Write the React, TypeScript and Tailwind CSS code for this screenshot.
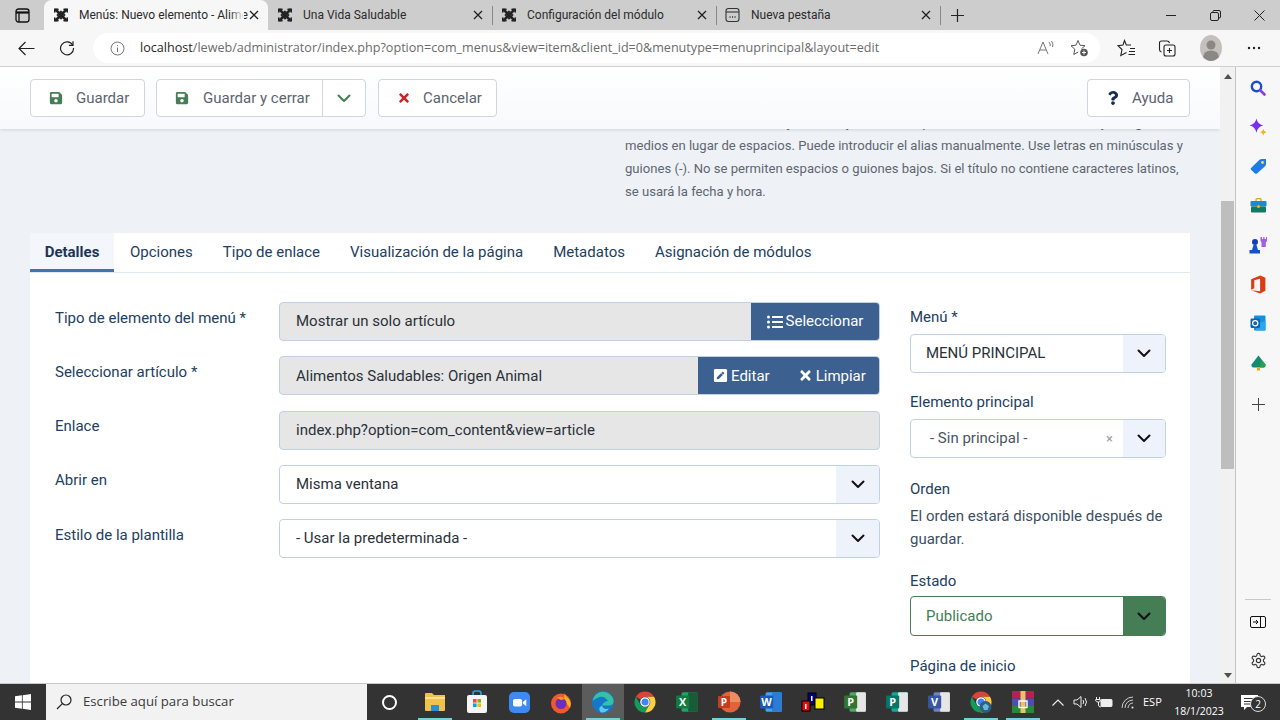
import React from "react";
import { FaSave, FaTimes, FaQuestion, FaListUl, FaPenSquare } from "react-icons/fa";

const JoomlaIcon = () => (
  <svg width="16" height="16" viewBox="0 0 16 16" className="shrink-0" fill="none" stroke="#222" strokeLinecap="round">
    <path d="M3 3 L13 13 M13 3 L3 13" strokeWidth="2.6" />
    <path d="M8 4.5 L11.5 8 L8 11.5 L4.5 8 Z" strokeWidth="1.6" />
    <path d="M1.8 5 V2.2 H5 M11 2.2 H14.2 V5 M1.8 11 V13.8 H5 M11 13.8 H14.2 V11" strokeWidth="1.6" />
  </svg>
);
const NewTabIcon = () => (
  <svg width="15" height="16" viewBox="0 0 15 16" className="shrink-0" fill="none" stroke="#333" strokeWidth="1.1">
    <rect x="1" y="1.5" width="13" height="13" rx="2.5" />
    <path d="M1 5 H14" />
    <path d="M4.5 10 H5.6 M7 10 H8.1 M9.5 10 H10.6" strokeWidth="1.5" />
  </svg>
);
const SmallX = () => (
  <svg width="10" height="10" viewBox="0 0 10 10" stroke="#222" strokeWidth="1.3" fill="none" className="shrink-0">
    <path d="M1 1 L9 9 M9 1 L1 9" />
  </svg>
);
const Chevron = ({ color = "#111" }: { color?: string }) => (
  <svg width="14" height="9" viewBox="0 0 14 9" fill="none" stroke={color} strokeWidth="2" strokeLinecap="round" strokeLinejoin="round">
    <path d="M1.5 1.5 L7 7 L12.5 1.5" />
  </svg>
);

function Tab({ title, active, icon, sep }: { title: string; active?: boolean; icon: React.ReactNode; sep?: boolean }) {
  return (
    <div className={"relative flex h-full w-[224px] shrink-0 items-center pl-[9px] pr-[4px] " + (active ? "rounded-t-lg bg-[#f7f7f7]" : "")}>
      <div className="flex w-[26px] shrink-0 justify-start">{icon}</div>
      <div className="relative min-w-0 flex-1 whitespace-nowrap font-['Roboto',sans-serif] text-[12px] text-[#2b2b2b]">
        {title}
        {active && <div className="absolute inset-y-0 right-0 w-[14px] bg-gradient-to-r from-transparent to-[#f7f7f7]" />}
      </div>
      <div className="flex w-[20px] shrink-0 justify-center">
        <SmallX />
      </div>
      {sep && <div className="absolute -right-px top-[6px] h-[19px] w-px bg-[#8a8a8a]" />}
    </div>
  );
}

function TabBar() {
  return (
    <div className="flex h-[30px] shrink-0 items-stretch bg-[#cdcdcd] font-['Open_Sans',sans-serif]">
      <div className="flex w-[44px] shrink-0 items-center justify-center">
        <svg width="15" height="15" viewBox="0 0 15 15" fill="none" stroke="#111" strokeWidth="1.3">
          <rect x="1" y="1" width="13" height="13" rx="2.5" />
          <path d="M1 4.5 H14" strokeWidth="2.2" />
          <path d="M4 4.5 V14" />
        </svg>
      </div>
      <Tab active title="Menús: Nuevo elemento - Alime" icon={<JoomlaIcon />} />
      <Tab title="Una Vida Saludable" icon={<JoomlaIcon />} sep />
      <Tab title="Configuración del módulo" icon={<JoomlaIcon />} sep />
      <Tab title="Nueva pestaña" icon={<NewTabIcon />} sep />
      <div className="flex w-[34px] shrink-0 items-center justify-center">
        <svg width="15" height="15" viewBox="0 0 15 15" stroke="#222" strokeWidth="1.2"><path d="M7.5 1 V14 M1 7.5 H14" /></svg>
      </div>
      <div className="flex flex-1 items-center justify-end">
        <div className="flex w-[45px] justify-center">
          <svg width="10" height="10" viewBox="0 0 10 10" stroke="#222"><path d="M0 5.5 H10" /></svg>
        </div>
        <div className="flex w-[45px] justify-center">
          <svg width="11" height="11" viewBox="0 0 11 11" fill="none" stroke="#222"><rect x="0.5" y="2.5" width="8" height="8" rx="1.5" /><path d="M3 2.5 V1.5 Q3 0.5 4 0.5 H9 Q10.5 0.5 10.5 2 V7 Q10.5 8 9 8" /></svg>
        </div>
        <div className="flex w-[42px] justify-center">
          <svg width="11" height="11" viewBox="0 0 11 11" stroke="#222"><path d="M0.5 0.5 L10.5 10.5 M10.5 0.5 L0.5 10.5" /></svg>
        </div>
      </div>
    </div>
  );
}

function AddressBar() {
  return (
    <div className="flex h-[36px] shrink-0 items-center bg-[#f7f7f7] font-['Open_Sans',sans-serif]">
      <div className="flex w-[52px] justify-center">
        <svg width="17" height="15" viewBox="0 0 17 15" fill="none" stroke="#222" strokeWidth="1.2"><path d="M16.5 7.5 H1 M7.5 1 L1 7.5 L7.5 14" /></svg>
      </div>
      <div className="flex w-[30px] justify-center">
        <svg width="16" height="16" viewBox="0 0 16 16" fill="none" stroke="#222" strokeWidth="1.2"><path d="M13.6 5 A6.5 6.5 0 1 0 14.5 8" /><path d="M14 1.2 V5.3 H9.9" /></svg>
      </div>
      <div className="ml-[11px] flex h-[30px] w-[1007px] items-center rounded-full bg-white pl-[17px] pr-[11px]">
        <svg width="15" height="15" viewBox="0 0 15 15" fill="none" stroke="#777" strokeWidth="1"><circle cx="7.5" cy="7.5" r="6.5" /><path d="M7.5 6.5 V11 M7.5 4 V5" /></svg>
        <span className="ml-[15px] flex-1 whitespace-nowrap text-[12.6px] text-[#6b6b6b]">
          <span className="text-[#1f1f1f]">localhost</span>/leweb/administrator/index.php?option=com_menus&amp;view=item&amp;client_id=0&amp;menutype=menuprincipal&amp;layout=edit
        </span>
        <svg width="18" height="16" viewBox="0 0 18 16" fill="none" stroke="#777" strokeWidth="1"><path d="M1 14 L6 2 L11 14 M3 10 H9" /><path d="M12 2 Q14 4 13 6 M14.5 1 Q17 4 15.5 7" /></svg>
        <svg className="ml-[15px]" width="19" height="18" viewBox="0 0 19 18" fill="none" stroke="#555" strokeWidth="1"><path d="M8 1.5 L10 6.2 L15 6.7 L11.5 9.8 M8 1.5 L6 6.2 L1 6.7 L4.8 10.2 L3.8 15.5 L8.2 13" /><circle cx="14" cy="13.5" r="3.8" fill="#555" stroke="none" /><path d="M14 11.5 V15.5 M12 13.5 H16" stroke="#fff" /></svg>
      </div>
      <div className="ml-[16px] flex w-[20px] justify-center">
        <svg width="19" height="18" viewBox="0 0 19 18" fill="none" stroke="#222" strokeWidth="1.1"><path d="M14 6 H9.3 L7.5 1.5 L6 6 L1 6.7 L5 10.5 L3.8 16.5 L9.5 13.5" /><path d="M13 9.5 H18 M12 12.5 H18 M11.5 15.5 H18" /></svg>
      </div>
      <div className="ml-[21px] flex w-[20px] justify-center">
        <svg width="18" height="18" viewBox="0 0 18 18" fill="none" stroke="#222" strokeWidth="1.1"><rect x="6" y="6" width="11" height="11" rx="2" /><path d="M11.5 9 V14 M9 11.5 H14" /><path d="M3.5 13 Q1.5 12.5 1.5 10.5 V4 Q1.5 2 3.5 2 H9 Q11 2 11.5 4" /></svg>
      </div>
      <div className="ml-[22px] flex w-[24px] justify-center">
        <svg width="22" height="26" viewBox="0 0 22 26"><ellipse cx="11" cy="13" rx="11" ry="13" fill="#c4c1bd" /><circle cx="11" cy="10" r="4.5" fill="#8a8784" /><path d="M3 22 Q4 15.5 11 15.5 Q18 15.5 19 22 Q15 26 11 26 Q7 26 3 22Z" fill="#8a8784" /></svg>
      </div>
      <div className="ml-[19px] flex w-[24px] justify-center">
        <svg width="14" height="4" viewBox="0 0 14 4" fill="#222"><circle cx="2" cy="2" r="1.2" /><circle cx="7" cy="2" r="1.2" /><circle cx="12" cy="2" r="1.2" /></svg>
      </div>
    </div>
  );
}

function ToolBtn({ icon, label, className = "" }: { icon: React.ReactNode; label: string; className?: string }) {
  return (
    <div className={"flex h-[38px] items-center rounded-[4px] border border-[#cfd6e0] bg-white text-[15px] text-[#5b6470] " + className}>
      {icon}
      <span>{label}</span>
    </div>
  );
}

function Field({ label, children }: { label: string; children: React.ReactNode }) {
  return (
    <div className="flex h-[39px] items-start">
      <div className="w-[224px] shrink-0 pt-[4.5px] text-[15px] text-[#22405f]">{label}</div>
      <div className="flex-1">{children}</div>
    </div>
  );
}

function ReadOnly({ text, children }: { text: string; children?: React.ReactNode }) {
  return (
    <div className="flex h-[39px] items-stretch overflow-hidden rounded-[4px] border border-[#c2d0e4] bg-[#e6e6e6] text-[15px] text-[#2a3138]">
      <div className="flex flex-1 items-center pl-[16px]">{text}</div>
      {children}
    </div>
  );
}

function Select({ text, right, clear }: { text: string; right?: boolean; clear?: boolean }) {
  return (
    <div className="flex h-[39px] items-stretch overflow-hidden rounded-[4px] border border-[#c2d0e4] bg-white text-[15px] text-[#2a3138]">
      <div className={"flex flex-1 items-center " + (clear ? "pl-[19px] text-[#4a5560]" : right ? "pl-[15px]" : "pl-[16px]")}>{text}</div>
      {clear && <div className="flex items-center pr-[10px] text-[13px] text-[#9aa0a6]">×</div>}
      <div className={"flex items-center justify-center bg-[#eef3fb] " + (right ? "w-[42px]" : "w-[43px]")}>
        <Chevron />
      </div>
    </div>
  );
}

function Page() {
  return (
    <div className="relative flex-1 overflow-hidden bg-[#eef2f7] font-['Roboto',sans-serif]">
      <div className="relative z-10 flex h-[62px] items-start justify-between bg-gradient-to-b from-white to-[#f7f9fc] pl-[30px] pr-[30px] pt-[12px] shadow-[0_1px_3px_rgba(0,0,0,0.12)]">
        <div className="flex gap-[11px]">
          <ToolBtn className="w-[115px] pl-[18px]" icon={<FaSave className="mr-[13px] text-[14px] text-[#457d54]" />} label="Guardar" />
          <div className="flex h-[38px] w-[210px] items-center rounded-[4px] border border-[#cfd6e0] bg-white text-[15px] text-[#5b6470]">
            <div className="flex flex-1 items-center pl-[18px]">
              <FaSave className="mr-[14px] text-[14px] text-[#457d54]" />
              <span className="whitespace-nowrap">Guardar y cerrar</span>
            </div>
            <div className="flex h-full w-[43px] items-center justify-center border-l border-[#cfd6e0]">
              <Chevron color="#457d54" />
            </div>
          </div>
          <ToolBtn className="ml-[1px] w-[119px] pl-[18px]" icon={<FaTimes className="mr-[12px] text-[14px] text-[#c52827]" />} label="Cancelar" />
        </div>
        <ToolBtn className="w-[103px] pl-[18px]" icon={<FaQuestion className="mr-[12px] text-[14px] text-[#132f53]" />} label="Ayuda" />
      </div>

      <p className="-mt-[18px] ml-[625px] w-[566px] text-[13.1px] leading-[23px] text-[#5f6670]">
        El alias se usa en la URL. Déjelo vacío y se creará a partir del título, en minúsculas y con guiones
        <br />
        medios en lugar de espacios. Puede introducir el alias manualmente. Use letras en minúsculas y
        <br />
        guiones (-). No se permiten espacios o guiones bajos. Si el título no contiene caracteres latinos,
        <br />
        se usará la fecha y hora.
      </p>

      <div className="ml-[30px] mt-[30px] w-[1160px] bg-white">
        <div className="flex h-[40px] items-stretch border-b border-[#e3e8f0] text-[15px] text-[#22405f]">
          <div className="flex w-[84px] items-center justify-center border-b-[3px] border-[#3f72b8] bg-[#f3f6fa] pt-[3px] font-bold text-[#1c3557]">Detalles</div>
          <div className="flex items-center pl-[16px] pr-[15px]">Opciones</div>
          <div className="flex items-center px-[15px]">Tipo de enlace</div>
          <div className="flex items-center px-[15px]">Visualización de la página</div>
          <div className="flex items-center px-[15px]">Metadatos</div>
          <div className="flex items-center px-[15px]">Asignación de módulos</div>
        </div>
        <div className="flex h-[500px] items-start pl-[25px] pt-[29px]">
          <div className="flex w-[825px] flex-col gap-[15.3px]">
            <Field label="Tipo de elemento del menú *">
              <ReadOnly text="Mostrar un solo artículo">
                <div className="flex w-[128px] items-center justify-center gap-[3px] bg-[#3c6090] text-white">
                  <FaListUl className="text-[16px]" />
                  <span>Seleccionar</span>
                </div>
              </ReadOnly>
            </Field>
            <Field label="Seleccionar artículo *">
              <ReadOnly text="Alimentos Saludables: Origen Animal">
                <div className="flex w-[181px] items-center bg-[#3c6090] pl-[15px] text-white">
                  <FaPenSquare className="mr-[3px] text-[15px]" />
                  <span>Editar</span>
                  <FaTimes className="ml-[28px] mr-[3px] text-[15px]" />
                  <span>Limpiar</span>
                </div>
              </ReadOnly>
            </Field>
            <Field label="Enlace">
              <ReadOnly text="index.php?option=com_content&view=article" />
            </Field>
            <Field label="Abrir en">
              <Select text="Misma ventana" />
            </Field>
            <Field label="Estilo de la plantilla">
              <Select text="- Usar la predeterminada -" />
            </Field>
          </div>
          <div className="ml-[30px] w-[256px] text-[15px] text-[#22405f]">
            <div className="mb-[5.5px] mt-[3.5px] leading-[23px]">Menú *</div>
            <Select text="MENÚ PRINCIPAL" right />
            <div className="mb-[5.5px] mt-[17.5px] leading-[23px]">Elemento principal</div>
            <Select text="- Sin principal -" right clear />
            <div className="mt-[19.5px] leading-[23px]">Orden</div>
            <div className="mt-[4px] leading-[23px] text-[#3c4f62]">El orden estará disponible después de guardar.</div>
            <div className="mt-[19px] leading-[23px]">Estado</div>
            <div className="mt-[3.5px] flex h-[40px] items-stretch overflow-hidden rounded-[4px] border border-[#457d54] bg-white text-[#457d54]">
              <div className="flex flex-1 items-center pl-[15px]">Publicado</div>
              <div className="flex w-[42px] items-center justify-center bg-[#457d54]">
                <Chevron />
              </div>
            </div>
            <div className="mt-[18.5px] leading-[23px]">Página de inicio</div>
          </div>
        </div>
      </div>
    </div>
  );
}

function Scrollbar() {
  return (
    <div className="flex w-[16px] shrink-0 flex-col items-center border-r border-[#c4c4c4] bg-[#f1f1f1]">
      <div className="flex h-[16px] items-center justify-center pt-[2px]">
        <div className="h-0 w-0 border-x-[4px] border-b-[5px] border-x-transparent border-b-[#505050]" />
      </div>
      <div className="mt-[118px] h-[268px] w-[13px] bg-[#bebebe]" />
      <div className="flex-1" />
      <div className="flex h-[16px] items-center justify-center">
        <div className="h-0 w-0 border-x-[4px] border-t-[5px] border-x-transparent border-t-[#505050]" />
      </div>
    </div>
  );
}

function Side({ children }: { children: React.ReactNode }) {
  return <div className="flex h-[39.3px] items-center justify-center">{children}</div>;
}

function Sidebar() {
  return (
    <div className="flex w-[44px] shrink-0 flex-col bg-[#f7f7f7] pt-[1px]">
      <Side>
        <svg width="16" height="16" viewBox="0 0 16 16" fill="none"><circle cx="6.5" cy="6.5" r="4.7" stroke="#1c4fd0" strokeWidth="2.4" /><path d="M10.5 10.5 L14.5 14.5" stroke="#8a3fd8" strokeWidth="2.6" strokeLinecap="round" /></svg>
      </Side>
      <Side>
        <svg width="18" height="18" viewBox="0 0 17 17"><path d="M7 0.5 Q8 6 13.5 7 Q8 8 7 14 Q6 8 0.5 7 Q6 6 7 0.5Z" fill="#7a2ff0" /><path d="M13.5 10.5 Q14 13 16.5 13.5 Q14 14 13.5 16.5 Q13 14 10.5 13.5 Q13 13 13.5 10.5Z" fill="#f5b21d" /></svg>
      </Side>
      <Side>
        <svg width="17" height="17" viewBox="0 0 17 17"><path d="M1 10 L9.5 1.8 Q10.5 1 12 1 H16 V6 Q16 7.5 15 8.3 L7 15.5 Q6 16.2 5 15.5 L1 11.8 Q0.3 11 1 10Z" fill="#1e7ce8" /><circle cx="12.5" cy="4.5" r="1.4" fill="#ffd75e" /></svg>
      </Side>
      <Side>
        <svg width="17" height="15" viewBox="0 0 17 15"><path d="M6 3 V1.5 Q6 0.7 7 0.7 H10 Q11 0.7 11 1.5 V3" fill="none" stroke="#e8a317" strokeWidth="1.3" /><rect x="0.5" y="3" width="16" height="5.5" rx="1" fill="#1b8ad0" /><rect x="1" y="8.5" width="15" height="6" rx="1" fill="#127a62" /><circle cx="8.5" cy="8.5" r="1.5" fill="#f5b21d" /></svg>
      </Side>
      <Side>
        <svg width="18" height="18" viewBox="0 0 18 18"><path d="M11.5 1 H13 V3 H14.2 V1 H15.5 V3 H17 V1 H18 V5 L16.8 6.5 V11 H12.5 V6.5 L11.5 5Z" fill="#a35ee8" /><circle cx="6" cy="6" r="3" fill="#123fb0" /><path d="M4.5 9 H7.5 L9 14 H11 V17.5 H0.5 V14 H3Z" fill="#1452c8" /></svg>
      </Side>
      <Side>
        <svg width="16" height="19" viewBox="0 0 15 18"><path d="M1 4 L9.5 0.5 L14.5 2.5 V15 L9.5 17.5 L1 14.5 L9.5 15.5 V3.5 L4 5 V12.5 L1 14Z" fill="#dc3c14" /></svg>
      </Side>
      <Side>
        <svg width="16" height="16" viewBox="0 0 16 16"><rect x="4" y="0.5" width="11.5" height="15" rx="1" fill="#1490df" /><path d="M6 9 L15.5 6 V15 Q15.5 15.5 15 15.5 H6Z" fill="#28a8ea" /><rect x="0.5" y="3.5" width="9.5" height="9.5" rx="1.2" fill="#0a64b8" /><circle cx="5.2" cy="8.2" r="2.6" fill="none" stroke="#fff" strokeWidth="1.3" /></svg>
      </Side>
      <Side>
        <svg width="15" height="16" viewBox="0 0 15 16"><path d="M7.5 0.5 L11 5 L14.5 9.5 Q15 12 12.5 12.5 H2.5 Q0 12 0.5 9.5 L4 5Z" fill="#138a72" /><path d="M10 5 L14.5 9.5 Q15 12 12.5 12.5 H9Z" fill="#2ea04f" /><rect x="6" y="12.5" width="3" height="3" fill="#f0a31c" /></svg>
      </Side>
      <div className="flex h-[45px] items-center justify-center">
        <svg width="13" height="13" viewBox="0 0 13 13" stroke="#444" strokeWidth="1"><path d="M6.5 0 V13 M0 6.5 H13" /></svg>
      </div>
      <div className="flex-1" />
      <div className="mx-[9px] h-px bg-[#c8c8c8]" />
      <div className="flex h-[44px] items-center justify-center">
        <svg width="16" height="12" viewBox="0 0 16 12" fill="none" stroke="#111"><rect x="0.5" y="0.5" width="15" height="11" rx="1.5" /><path d="M10.5 0.5 V11.5" /><path d="M3 6 H8 M6 4 L8 6 L6 8" /></svg>
      </div>
      <div className="flex h-[39px] items-start justify-center pt-[8px]">
        <svg width="17" height="17" viewBox="0 0 24 24" fill="none" stroke="#333" strokeWidth="1.6"><path d="M12.22 2h-.44a2 2 0 0 0-2 2v.18a2 2 0 0 1-1 1.73l-.43.25a2 2 0 0 1-2 0l-.15-.08a2 2 0 0 0-2.73.73l-.22.38a2 2 0 0 0 .73 2.73l.15.1a2 2 0 0 1 1 1.72v.51a2 2 0 0 1-1 1.74l-.15.09a2 2 0 0 0-.73 2.73l.22.38a2 2 0 0 0 2.73.73l.15-.08a2 2 0 0 1 2 0l.43.25a2 2 0 0 1 1 1.73V20a2 2 0 0 0 2 2h.44a2 2 0 0 0 2-2v-.18a2 2 0 0 1 1-1.73l.43-.25a2 2 0 0 1 2 0l.15.08a2 2 0 0 0 2.73-.73l.22-.39a2 2 0 0 0-.73-2.73l-.15-.08a2 2 0 0 1-1-1.74v-.5a2 2 0 0 1 1-1.74l.15-.09a2 2 0 0 0 .73-2.73l-.22-.38a2 2 0 0 0-2.73-.73l-.15.08a2 2 0 0 1-2 0l-.43-.25a2 2 0 0 1-1-1.73V4a2 2 0 0 0-2-2z" /><circle cx="12" cy="12" r="3" /></svg>
      </div>
    </div>
  );
}

const Doc = ({ bg, dark, letter, right }: { bg: string; dark: string; letter: string; right?: string }) => (
  <svg width="24" height="24" viewBox="0 0 22 22">
    <rect x="6" y="2" width="15" height="18" rx="1.5" fill={bg} />
    <rect x="12" y="2" width="9" height="18" rx="1" fill={right || dark} />
    <rect x="1" y="5" width="12" height="12" rx="1" fill={dark} />
    <text x="7" y="15" textAnchor="middle" fontSize="10" fontWeight="700" fill="#fff" fontFamily="Open Sans, sans-serif">{letter}</text>
  </svg>
);

const Chrome = ({ badge }: { badge?: boolean }) => (
  <svg width="24" height="24" viewBox="0 0 24 24">
    <path d="M12 1.5 A10.5 10.5 0 0 1 21.1 6.75 H12 A5.25 5.25 0 0 0 7.45 9.4 L2.9 6.75 A10.5 10.5 0 0 1 12 1.5Z" fill="#db4437" />
    <path d="M2.9 6.75 A10.5 10.5 0 0 0 12 22.5 L16.55 14.6 A5.25 5.25 0 0 1 7.45 14.6Z" fill="#0f9d58" />
    <path d="M21.1 6.75 A10.5 10.5 0 0 1 12 22.5 L16.55 14.6 A5.25 5.25 0 0 0 12 6.75Z" fill="#ffcd40" />
    <circle cx="12" cy="12" r="4.2" fill="#4285f4" stroke="#fff" strokeWidth="1.2" />
    {badge && <circle cx="16.5" cy="17" r="6" fill="#2c5f80" />}
    {badge && <path d="M13.5 16 L16.5 13.5 L20 16 L18.5 20 H15Z" fill="#68b8d8" />}
  </svg>
);

const slots: { icon: React.ReactNode; mark?: boolean; active?: boolean }[] = [
  {
    mark: true,
    icon: (
      <svg width="22" height="20" viewBox="0 0 22 20"><path d="M1 2 Q1 1 2 1 H8 L10 3 H21 V18 Q21 19 20 19 H2 Q1 19 1 18Z" fill="#f0c14b" /><path d="M1 5 H21 V7 H1Z" fill="#fde08a" /><rect x="7" y="13" width="8" height="6" fill="#2b8fd8" /></svg>
    ),
  },
  {
    icon: (
      <svg width="22" height="24" viewBox="0 0 22 24"><path d="M7 6 V3.5 Q7 1 9.5 1 H12.5 Q15 1 15 3.5 V6" fill="none" stroke="#22a5e0" strokeWidth="1.6" /><rect x="1" y="5" width="20" height="18" rx="2" fill="#f5f5f5" /><rect x="7" y="9" width="3.6" height="3.6" fill="#f25022" /><rect x="11.4" y="9" width="3.6" height="3.6" fill="#7fba00" /><rect x="7" y="13.4" width="3.6" height="3.6" fill="#00a4ef" /><rect x="11.4" y="13.4" width="3.6" height="3.6" fill="#ffb900" /></svg>
    ),
  },
  {
    icon: (
      <svg width="21" height="21" viewBox="0 0 21 21"><rect width="21" height="21" rx="5" fill="#3d8bf2" /><rect x="4" y="7" width="9" height="7.5" rx="1.8" fill="#fff" /><path d="M13.8 10 L17.3 7.3 V14.3 L13.8 11.6Z" fill="#fff" /></svg>
    ),
  },
  {
    icon: (
      <svg width="22" height="24" viewBox="0 0 22 24"><circle cx="11" cy="13.5" r="10" fill="#f0592a" /><path d="M15 1 Q14 5 18 8 Q22 12 20 18 L14 10Z" fill="#ffb01f" /><circle cx="11" cy="13.5" r="5.5" fill="#6b2fc0" /><path d="M7 8 Q11 5 15 9 L11 10Z" fill="#ff9724" /></svg>
    ),
  },
  {
    active: true,
    icon: (
      <svg width="24" height="24" viewBox="0 0 24 24"><circle cx="12" cy="12" r="11" fill="#1478c8" /><path d="M1.5 11 A10.7 10.7 0 0 1 22.5 10 Q23 15 18.5 15.5 L11 15.5 Q13 11 17 11 Q13 5 7 7.5 Q3.5 9 1.5 11Z" fill="#35c1a6" /><path d="M11 15.5 Q12 20 18 18.5 Q15 23 10 22.5 Q6 18 11 15.5Z" fill="#5fc8f2" /></svg>
    ),
  },
  { icon: <Chrome /> },
  { icon: <Doc bg="#21a366" dark="#107c41" right="#185c37" letter="X" /> },
  {
    mark: true,
    icon: (
      <svg width="24" height="22" viewBox="0 0 24 22"><circle cx="13" cy="11" r="10.5" fill="#e0633b" /><path d="M13 .5 A10.5 10.5 0 0 1 23.5 11 H13Z" fill="#ed8b64" /><rect x="1" y="5" width="12" height="12" rx="1" fill="#c43e1c" /><text x="7" y="15" textAnchor="middle" fontSize="10" fontWeight="700" fill="#fff" fontFamily="Open Sans, sans-serif">P</text></svg>
    ),
  },
  { icon: <Doc bg="#41a5ee" dark="#185abd" right="#2b7cd3" letter="W" /> },
  {
    icon: (
      <svg width="24" height="22" viewBox="0 0 24 22"><rect x="7" y="2" width="8" height="12" fill="#000080" stroke="#000" /><rect x="14" y="7" width="9" height="11" fill="#ffee00" stroke="#000" /><rect x="1" y="10" width="8" height="10" fill="#e01010" stroke="#000" /><rect x="10" y="5" width="1.5" height="5" fill="#fff" /><rect x="4" y="13" width="1.5" height="5" fill="#fff" /></svg>
    ),
  },
  { icon: <Doc bg="#4da76b" dark="#31752f" right="#e6e6e6" letter="P" /> },
  { icon: <Doc bg="#13a89e" dark="#077568" right="#e6e6e6" letter="P" /> },
  { icon: <Doc bg="#6d83c9" dark="#3955a3" right="#e6e6e6" letter="V" /> },
  { mark: true, icon: <Chrome badge /> },
  {
    mark: true,
    icon: (
      <svg width="24" height="24" viewBox="0 0 24 24"><rect x="1" y="1" width="22" height="7.5" fill="#b81f53" /><rect x="1" y="8.5" width="22" height="7.5" fill="#4c4fb0" /><rect x="1" y="16" width="22" height="7" fill="#27883a" /><rect x="9.5" y="1" width="5" height="22" fill="#e8c36a" /><rect x="8" y="11" width="8" height="6.5" fill="none" stroke="#fff" strokeWidth="1.4" /></svg>
    ),
  },
];

function Taskbar() {
  return (
    <div className="flex h-[37px] shrink-0 items-stretch border-t border-[#c9c9c9] bg-[#333333] font-['Open_Sans',sans-serif]">
      <div className="flex w-[46px] shrink-0 items-center justify-center">
        <svg width="16" height="16" viewBox="0 0 16 16" fill="#fff"><path d="M0 2.3 L6.9 1.3 V7.5 H0Z M7.7 1.2 L16 0 V7.5 H7.7Z M0 8.5 H6.9 V14.7 L0 13.7Z M7.7 8.5 H16 V16 L7.7 14.8Z" /></svg>
      </div>
      <div className="flex w-[321px] shrink-0 items-center bg-[#f2f2f2] pl-[10px]">
        <svg width="16" height="16" viewBox="0 0 16 16" fill="none" stroke="#222" strokeWidth="1.2"><circle cx="10" cy="6" r="5" /><path d="M6.3 9.7 L1 15" /></svg>
        <span className="ml-[11px] text-[13.2px] text-[#3a3a3a]">Escribe aquí para buscar</span>
      </div>
      <div className="flex w-[47px] shrink-0 items-center justify-center">
        <div className="mr-[2px] h-[15px] w-[15px] rounded-full border-[2.5px] border-white" />
      </div>
      {slots.map((s, i) => (
        <div key={i} className={"relative flex w-[42px] shrink-0 items-center justify-center " + (s.active ? "bg-[#5c5c5c]" : "")}>
          {s.icon}
          {(s.mark || s.active) && <div className="absolute inset-x-[4px] bottom-0 h-[2px] bg-[#76d0d8]" />}
        </div>
      ))}
      <div className="flex min-w-0 flex-1 items-center text-white">
        <div className="ml-[2px] flex w-[24px] shrink-0 justify-center">
          <svg width="12" height="7" viewBox="0 0 12 7" fill="none" stroke="#eee" strokeWidth="1.1"><path d="M0.5 6.5 L6 1 L11.5 6.5" /></svg>
        </div>
        <div className="flex w-[22px] shrink-0 justify-center">
          <svg width="16" height="14" viewBox="0 0 16 14" fill="none" stroke="#eee"><path d="M1 5 H4 L8 1.5 V12.5 L4 9 H1Z" /><path d="M10 5 Q11.5 7 10 9 M12 3 Q15 7 12 11" /></svg>
        </div>
        <div className="flex w-[24px] shrink-0 justify-center">
          <svg width="18" height="13" viewBox="0 0 18 13" fill="none" stroke="#eee"><rect x="6" y="3.5" width="11" height="7" rx="0.8" fill="#eee" /><path d="M3.5 6 V9 Q3.5 11 6 11 M1.5 1 V3.5 M4.5 1 V3.5 M0.8 3.5 H5.2 V5 Q5.2 6 3.5 6 Q1 6 0.8 5Z" /></svg>
        </div>
        <div className="flex w-[24px] shrink-0 justify-center">
          <svg width="15" height="13" viewBox="0 0 15 13" fill="none" stroke="#ccc"><path d="M1 12 A11 11 0 0 1 12 1 M4 12 A8 8 0 0 1 12 4 M7 12 A5 5 0 0 1 12 7" /><circle cx="11.5" cy="11.5" r="1" fill="#eee" stroke="none" /></svg>
        </div>
        <div className="ml-[3px] w-[25px] shrink-0 text-[11px]">ESP</div>
        <div className="flex w-[62px] shrink-0 flex-col items-center text-[10.5px] leading-[18px]">
          <span>10:03</span>
          <span>18/1/2023</span>
        </div>
        <div className="relative ml-[11px] flex w-[28px] shrink-0 items-center">
          <svg width="17" height="15" viewBox="0 0 17 15" fill="#fff"><path d="M0 0 H17 V12 H6 L3 15 V12 H0Z" /><path d="M3 3.5 H14 M3 6.5 H14 M3 9 H10" stroke="#333" /></svg>
          <div className="absolute left-[9px] top-[1px] flex h-[16px] w-[16px] items-center justify-center rounded-full border border-[#ddd] bg-[#333] text-[10px] leading-none">2</div>
        </div>
      </div>
    </div>
  );
}

export default function App() {
  return (
    <div className="flex h-[720px] w-[1280px] flex-col overflow-hidden bg-white">
      <TabBar />
      <AddressBar />
      <div className="flex min-h-0 flex-1 border-t border-[#d0d0d0]">
        <Page />
        <Scrollbar />
        <Sidebar />
      </div>
      <Taskbar />
    </div>
  );
}
